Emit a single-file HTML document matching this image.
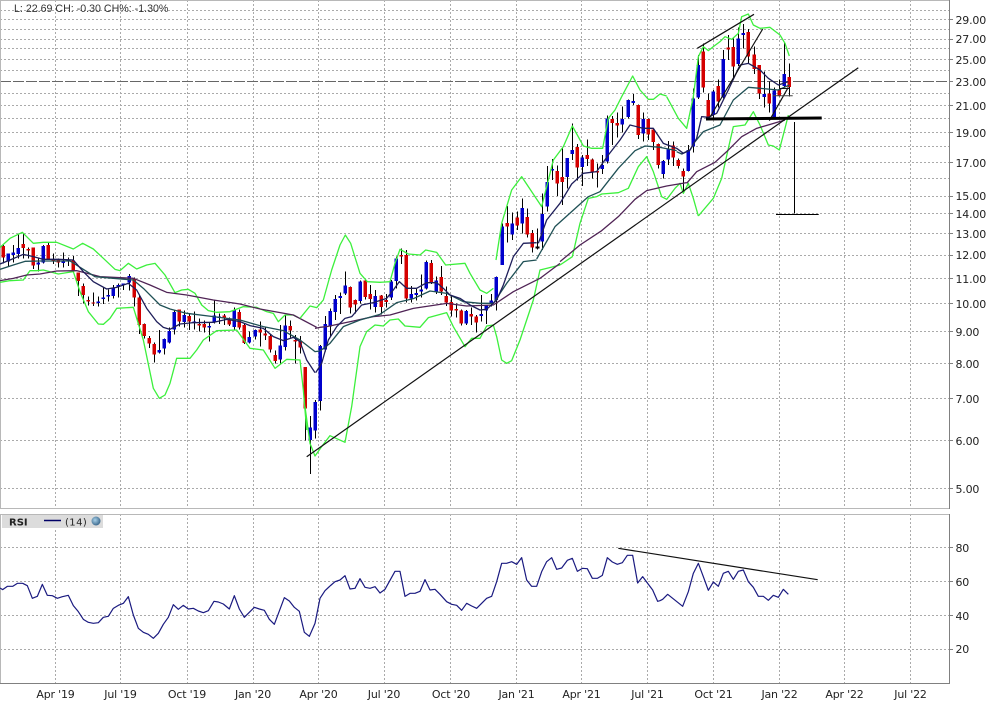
<!DOCTYPE html>
<html><head><meta charset="utf-8"><title>Chart</title>
<style>
html,body{margin:0;padding:0;background:#fff;width:995px;height:708px;overflow:hidden}
svg{display:block}
text{font-family:"DejaVu Sans","Liberation Sans",sans-serif;font-size:11px;fill:#222;letter-spacing:-.2px}
.w{fill:none;stroke:#000;stroke-width:3.3;shape-rendering:crispEdges}
.r{fill:none;stroke:#d40000;stroke-width:11.5;shape-rendering:crispEdges}
.b{fill:none;stroke:#0000cc;stroke-width:11.5;shape-rendering:crispEdges}
.gu{fill:none;stroke:#3cf03c;stroke-width:3.9;stroke-linejoin:round}
.ma1{fill:none;stroke:#1e1e5a;stroke-width:3.9;stroke-linejoin:round}
.ma2{fill:none;stroke:#1f5055;stroke-width:3.9;stroke-linejoin:round}
.ma3{fill:none;stroke:#4f2355;stroke-width:3.9;stroke-linejoin:round}
.rsi{fill:none;stroke:#1a1a80;stroke-width:3.6;stroke-linejoin:round}
</style></head><body>
<svg width="995" height="708" viewBox="0 0 995 708" xmlns="http://www.w3.org/2000/svg">
<defs><radialGradient id="ic" cx=".4" cy=".4" r=".7"><stop offset="0" stop-color="#a8d0e8"/><stop offset="1" stop-color="#2c5a80"/></radialGradient></defs>
<rect width="995" height="708" fill="#fff"/>
<!-- grid -->
<g shape-rendering="crispEdges" fill="none" stroke="#aaaaaa" stroke-dasharray="2 2">
<path d="M0 10.5H949M0 19.5H949M0 29.5H949M0 39.5H949M0 48.5H949M0 59.5H949M0 70.5H949M0 93.5H949M0 105.5H949M0 118.5H949M0 132.5H949M0 146.5H949M0 162.5H949M0 178.5H949M0 196.5H949M0 213.5H949M0 233.5H949M0 255.5H949M0 278.5H949M0 303.5H949M0 331.5H949M0 363.5H949M0 398.5H949M0 440.5H949M0 488.5H949"/>
<path d="M0 547.5H949M0 581.5H949M0 615.5H949M0 649.5H949"/>
<path d="M55.5 0V508M120.5 0V508M187.5 0V508M253.5 0V508M318.5 0V508M384.5 0V508M450.5 0V508M516.5 0V508M581.5 0V508M647.5 0V508M713.5 0V508M779.5 0V508M844.5 0V508M910.5 0V508"/>
<path d="M55.5 514V686M120.5 514V686M187.5 514V686M253.5 514V686M318.5 514V686M384.5 514V686M450.5 514V686M516.5 514V686M581.5 514V686M647.5 514V686M713.5 514V686M779.5 514V686M844.5 514V686M910.5 514V686"/>
</g>
<path d="M0 81.5H949" stroke="#666" stroke-width="1" stroke-dasharray="11 2" fill="none" shape-rendering="crispEdges"/>
<!-- frames -->
<g shape-rendering="crispEdges" fill="none">
<path d="M0 .5H949M.5 0V508M0 508.5H949M0 514.5H949M.5 514V683" stroke="#b8b8b8"/>
<path d="M949.5 0V509M949.5 514V684M0 683.5H950" stroke="#808080"/>
<path d="M950 19.5H953M950 39.5H953M950 59.5H953M950 81.5H953M950 105.5H953M950 132.5H953M950 162.5H953M950 196.5H953M950 213.5H953M950 233.5H953M950 255.5H953M950 278.5H953M950 303.5H953M950 331.5H953M950 363.5H953M950 398.5H953M950 440.5H953M950 488.5H953M950 547.5H953M950 581.5H953M950 615.5H953M950 649.5H953" stroke="#808080"/>
</g>
<!-- segment 1 -->
<g transform="translate(0,200) scale(.33333)">
<path class="w" d="M10 135V190M25 160V200M40 135V188M55 100V175M70 100V175M85 143V175M100 142V207M115 175V214M130 135V190M145 128V180M160 160V192M175 175V203M190 157V203M205 172V198M220 168V218M235 218V288M250 250V310M265 290V316M280 277V318M295 290V320M310 262V312M325 268V305M340 255V295M355 250V292M370 250V270M388 222V272M403 232V320M418 285V402M433 370V416M448 408V444M463 428V488M478 390V460M493 415V464M508 382V430M523 332V404M538 328V380M553 332V382M568 342V390M583 335V388M598 355V395M613 362V398M628 368V425M643 300V370M658 340V372M673 342V375M688 352V378M703 322V392M718 328V388M733 372V432M748 395V430M766 388V418M781 365V440M796 382V420M811 402V458M826 452V490M841 375V490M856 344V452M871 362V412M886 405V490M901 408V460"/>
<path class="r" d="M10 138V172M70 132V144M85 147V152M100 142V197M145 135V177M160 178V182M175 178V188M220 181V214M235 218V243M250 258V285M265 300V305M280 307V311M403 237V293M418 293V375M433 372V408M448 414V430M463 432V464M538 328V365M568 348V365M598 372V377M613 372V383M673 347V356M688 358V374M718 336V383M733 375V429M781 388V398M796 400V407M811 408V449M826 465V483M871 378V392M886 420V425M901 424V443"/>
<path class="b" d="M25 160V185M40 158V165M55 144V162M115 188V194M130 138V188M190 183V189M205 180V185M295 304V309M310 292V297M325 285V290M340 262V288M355 255V261M370 250V255M388 228V248M478 450V458M493 417V446M508 393V428M523 336V389M553 345V366M583 364V368M628 378V383M643 346V367M658 350V354M703 330V381M748 411V428M766 390V410M841 436V479M856 376V441"/>
</g>
<!-- segment 2 -->
<g transform="translate(280,220) scale(.33333)">
<path class="w" d="M76 441V662M91 588V762M106 540V655M121 375V572M136 288V395M151 265V350M166 225V300M181 218V282M196 155V225M211 200V280M226 238V280M241 182V250M256 180V238M271 195V268M286 210V278M304 225V283M319 222V262M334 180V240M349 110V205M364 85V132M379 90V248M394 198V248M409 205V242M424 163V232M439 122V208M454 120V192M469 170V222M484 138V225M499 200V258M514 230V290M529 250V292M544 268V316M559 270V315M574 262V315M589 285V338M604 225V305M619 255V312M634 222V260M649 170V272"/>
<path class="r" d="M76 441V566M211 201V263M226 240V254M256 182V231M271 222V237M304 226V261M319 240V246M364 105V110M379 105V236M454 129V186M484 171V215M499 228V248M514 246V272M529 267V272M544 271V311M574 282V289M589 289V308"/>
<path class="b" d="M91 622V660M106 546V632M121 378V543M136 312V388M151 273V319M166 237V276M181 228V234M196 196V220M241 185V243M286 228V261M334 185V233M349 115V183M394 222V235M409 219V225M424 209V215M439 126V205M469 181V214M559 273V310M604 282V288M619 256V272M634 241V250M649 171V240"/>
</g>
<!-- segment 3 -->
<g transform="translate(480,60) scale(.33333)">
<path class="w" d="M67 490V615M82 438V548M97 458V540M112 455V510M127 415V520M142 445V532M157 510V578M172 505V568M187 400V570M202 318V455M217 297V360M232 316V408M247 262V435M262 294V385M277 190V300M292 252V362M307 285V378M322 238V318M337 296V356M352 310V382M367 285V342M382 167V310M397 168V255M412 157V232M427 140V217M445 118V175M460 102V135M475 133V237M490 158V245M505 175V240M520 205V270M535 250V326M550 300V356M565 243V315"/>
<path class="r" d="M82 489V500M112 473V497M142 471V524M157 519V562M232 333V371M247 351V366M292 261V323M322 285V297M337 298V336M352 333V337M397 177V189M412 189V197M475 135V225M505 177V224M520 208V246M535 252V315"/>
<path class="w" d="M167 562.500H178" style="stroke-width:6"/>
<path class="b" d="M67 500V615M97 490V524M127 444V491M187 462V545M202 366V440M217 327V332M262 294V351M277 270V282M307 293V321M367 315V327M382 175V305M427 177V194M445 120V171M460 123V129M490 177V221M550 303V342M565 269V299"/>
</g>
<!-- segment 4 -->
<g transform="translate(670,0) scale(.33333)">
<path class="w" d="M10 425V498M25 475V505M40 505V575M55 435V515M70 265V457M85 165V297M100 130V277M115 280V360M130 270V355M145 238V322M160 150V295M175 105V180M190 115V235M205 82V198M220 72V145M235 87V190M253 140V222M268 195V297M283 215V322M298 245V338M313 262V355M328 238V290M343 128V262M358 190V290"/>
<path class="r" d="M10 436V473M25 480V498M40 513V530M100 155V263M115 300V352M145 258V305M175 143V149M190 141V200M235 96V170M253 163V207M268 195V281M298 280V311M328 269V288M358 231V261"/>
<path class="b" d="M55 450V513M70 295V440M85 195V293M130 275V345M160 177V292M205 116V192M220 99V105M283 282V291M313 272V355M343 222V258"/>
</g>
<!-- MA / BB lines -->
<g transform="translate(0,200) scale(.33333)">
<path class="gu" d="M0 142L30 115L67 97L100 130L130 127L170 127L220 147L248 130L280 147L310 175L345 208L360 212L385 190L410 207L440 195L465 190L495 225L525 278L545 270L565 268L585 280L605 315L625 332L650 337L690 335L730 320L770 322L800 335L820 340L835 365L855 345L880 345L893 352"/>
<path class="gu" d="M0 247L30 242L70 240L90 212L110 212L130 210L175 222L220 215L240 275L265 335L295 372L310 373L330 355L350 325L400 322L430 420L460 565L478 595L495 585L510 550L530 475L570 475L590 450L610 420L650 392L710 390L750 445L790 450L825 505L860 478L900 480L910 570L920 690"/>
<path class="ma3" d="M0 242L40 235L80 225L120 222L170 213L230 212L300 230L400 235L450 255L500 277L560 285L640 300L720 312L780 327L880 345L950 382"/>
<path class="ma2" d="M0 208L40 195L75 184L120 183L210 183L245 205L285 230L340 235L400 240L430 265L480 315L510 327L560 340L640 350L720 360L790 380L850 392L900 420L945 455L960 453"/>
<path class="ma1" d="M0 192L30 180L70 163L100 170L130 178L175 178L220 180L250 215L280 245L320 267L350 262L385 250L410 270L440 325L470 365L490 382L510 388L540 372L580 368L640 367L680 358L720 365L750 377L790 385L820 410L850 422L880 412L900 425L920 480L945 518"/>
</g>
<g transform="translate(280,220) scale(.33333)">
<path class="gu" d="M60 295L90 258L110 263L130 240L155 150L180 75L196 45L212 70L240 160L262 185L300 187L330 185L345 130L360 88L385 102L420 105L437 90L470 97L497 135L555 130L570 160L600 210L620 220L640 205"/>
<path class="gu" d="M75 560L90 670L105 708L125 680L150 647L195 667L215 560L240 380L260 335L285 315L310 318L330 300L355 297L375 318L420 322L445 293L500 278L520 320L555 380L575 355L600 355L620 318L640 315L650 350L665 420L680 430L695 422L720 360L760 240L780 150L800 145L840 135"/>
<path class="ma3" d="M105 325L120 322L140 320L220 303L280 290L330 285L400 265L500 250L560 258L640 255L700 215L780 175L840 130"/>
<path class="ma2" d="M120 393L150 370L190 320L240 300L300 283L350 248L400 236L450 213L500 220L550 245L600 250L640 250L680 190L730 125L770 120"/>
<path class="ma1" d="M107 458L125 430L145 360L170 320L195 295L215 290L245 255L280 248L320 235L340 210L358 185L380 205L410 205L440 188L470 188L490 205L510 225L540 235L570 255L600 270L620 268L650 240L670 195L700 110L730 70L770 68"/>
</g>
<g transform="translate(480,60) scale(.33333)">
<path class="gu" d="M48 600L65 490L95 390L125 350L185 440L195 400L220 300L250 260L277 198L310 258L335 265L368 265L385 175L405 150L425 110L458 48L480 90L505 118L520 118L540 102L560 108"/>
<path class="gu" d="M240 615L277 590L300 490L325 415L350 410L365 402L415 398L445 385L475 320L500 290L520 335L545 410L560 418L585 385L600 370L610 400L625 370L640 415L655 468"/>
<path class="ma3" d="M240 605L300 555L365 512L415 470L465 418L500 392L560 378L620 368"/>
<path class="ma2" d="M170 597L225 500L275 455L325 410L360 395L415 325L465 272L495 258L540 262L590 272"/>
<path class="ma1" d="M175 550L200 480L240 430L275 372L310 340L350 335L385 285L420 240L450 195L490 205L520 205L550 250L590 265L610 280"/>
</g>
<g transform="translate(670,0) scale(.33333)">
<path class="gu" d="M-10 290L25 355L50 385L70 290L85 170L100 140L115 152L130 140L150 125L165 110L185 118L205 100L215 50L235 42L250 75L270 85L300 82L330 105L345 130L358 168"/>
<path class="gu" d="M85 648L130 595L155 535L175 445L190 380L225 375L250 335L270 375L295 435L310 438L328 450L345 385L355 345"/>
<path class="ma3" d="M50 550L80 515L135 487L170 455L215 410L260 385L345 360"/>
<path class="ma2" d="M20 455L35 462L60 450L75 425L100 395L150 375L190 300L235 262L270 265L325 270L358 255"/>
<path class="ma1" d="M35 462L60 450L80 415L95 350L115 352L140 340L175 270L210 195L235 190L270 210L295 235L325 255L355 245"/>
</g>
<!-- annotations -->
<g fill="none" stroke="#111">
<path d="M306.700 456.700L858.300 67.700" stroke-width="1.200"/>
<path d="M697.300 48.300L754 14.300" stroke-width="1.200"/>
<path d="M762.700 29L710 117" stroke-width="1.200"/>
<path d="M769.300 120.700L788.300 87.300" stroke-width="1.200"/>
<path d="M773 95.700H792.700" stroke="#444" stroke-width="1"/>
<path d="M779 88.500H790" stroke-width="1"/>
<path d="M706 119L821.700 118" stroke="#000" stroke-width="3"/>
<path d="M794.500 122V213.500" stroke="#000" stroke-width="1"/>
<path d="M776 214.500H818.700" stroke="#000" stroke-width="1"/>
<path d="M618.300 548.300L817.700 579.700" stroke-width="1.200"/>
</g>
<!-- RSI -->
<path class="rsi" transform="translate(0,500) scale(.33333)" d="M0 264L8 269L22 259L38 259L52 250L68 250L82 257L97 295L112 289L127 253L142 286L157 287L172 295L187 290L205 286L220 317L235 335L250 358L265 367L280 370L295 368L310 352L325 349L340 325L355 316L370 310L385 290L400 345L415 385L430 397L445 403L460 415L475 400L490 373L505 352L520 314L535 328L550 316L565 327L580 325L595 333L610 338L625 332L642 304L655 306L670 312L688 327L703 287L718 327L733 352L748 337L763 322L778 327L793 331L808 358L823 373L853 293L868 303L883 322L898 334L913 397L928 409L945 370L960 295L975 272L990 258"/>
<path class="rsi" transform="translate(330,530) scale(.33333)" d="M0 168L15 155L30 150L45 137L60 177L75 175L90 146L105 172L120 175L135 170L150 189L165 178L195 124L210 124L225 199L240 190L255 190L270 184L285 149L300 180L315 178L330 193L350 215L365 223L380 226L395 241L410 220L425 228L440 235L470 205L485 199L500 155L515 100L530 100L545 95L560 103L575 83L590 150L605 169L620 169L635 125L650 95L665 83L680 118L695 114L712 91L727 85L742 124L757 115L772 116L787 145L802 145L817 136L832 83L847 96L862 103L877 98L892 76L908 76L923 159L938 140L953 160L968 180L983 214L990 212"/>
<path class="rsi" transform="translate(660,530) scale(.33333)" d="M0 212L8 208L23 193L68 229L85 185L100 130L115 100L130 140L145 181L160 156L175 169L190 130L205 124L220 148L235 124L250 120L265 155L280 172L295 199L310 199L325 211L340 196L355 202L370 178L385 193"/>
<!-- legend -->
<rect x="2" y="515" width="101" height="13" fill="#dcdcdc"/>
<text x="9" y="525.500" style="font-weight:bold;font-size:10px;letter-spacing:0">RSI</text>
<path d="M44 520.500H61" stroke="#000066" stroke-width="1.500" fill="none"/>
<text x="65" y="525.500" style="font-size:10px;letter-spacing:.4px">(14)</text>
<circle cx="96" cy="521" r="4.500" fill="url(#ic)"/>
<!-- header -->
<text x="14" y="12" style="font-family:'Liberation Sans',sans-serif;font-size:10.650px;fill:#333;letter-spacing:0">L: 22.69 CH: -0.30 CH%: -1.30%</text>
<!-- y labels -->
<g>
<text x="955.500" y="24">29.00</text>
<text x="955.500" y="43">27.00</text>
<text x="955.500" y="64">25.00</text>
<text x="955.500" y="86">23.00</text>
<text x="955.500" y="110">21.00</text>
<text x="955.500" y="137">19.00</text>
<text x="955.500" y="167">17.00</text>
<text x="955.500" y="200">15.00</text>
<text x="955.500" y="218">14.00</text>
<text x="955.500" y="238">13.00</text>
<text x="955.500" y="259">12.00</text>
<text x="955.500" y="283">11.00</text>
<text x="955.500" y="308">10.00</text>
<text x="955.500" y="336">9.00</text>
<text x="955.500" y="368">8.00</text>
<text x="955.500" y="403">7.00</text>
<text x="955.500" y="445">6.00</text>
<text x="955.500" y="493">5.00</text>
<text x="955.500" y="552">80</text>
<text x="955.500" y="586">60</text>
<text x="955.500" y="620">40</text>
<text x="955.500" y="653">20</text>
</g>
<!-- x labels -->
<g text-anchor="middle">
<text x="55.500" y="698">Apr '19</text>
<text x="120.500" y="698">Jul '19</text>
<text x="187" y="698">Oct '19</text>
<text x="253" y="698">Jan '20</text>
<text x="318.500" y="698">Apr '20</text>
<text x="384" y="698">Jul '20</text>
<text x="451" y="698">Oct '20</text>
<text x="516.500" y="698">Jan '21</text>
<text x="581.500" y="698">Apr '21</text>
<text x="647.500" y="698">Jul '21</text>
<text x="713.500" y="698">Oct '21</text>
<text x="779.500" y="698">Jan '22</text>
<text x="844.500" y="698">Apr '22</text>
<text x="910.500" y="698">Jul '22</text>
</g>
</svg>
</body></html>
